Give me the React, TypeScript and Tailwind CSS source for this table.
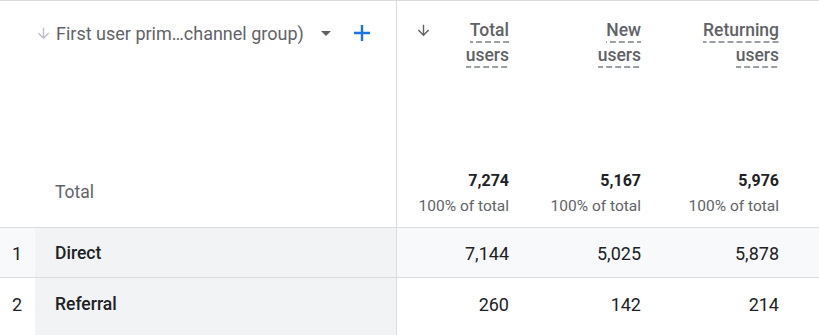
import React from 'react'

const METRICS = [
  { key: 'total', top: 'Total', bottom: 'users', width: 'w-[122px]', sorted: true },
  { key: 'new', top: 'New', bottom: 'users', width: 'w-[132px]', sorted: false },
  { key: 'ret', top: 'Returning', bottom: 'users', width: 'w-[138px]', sorted: false },
]

const TOTALS = ['7,274', '5,167', '5,976']

const ROWS = [
  { idx: 1, name: 'Direct', values: ['7,144', '5,025', '5,878'] },
  { idx: 2, name: 'Referral', values: ['260', '142', '214'] },
]

function ArrowDown({ className }: { className?: string }) {
  return (
    <svg viewBox="0 0 24 24" className={className} fill="currentColor">
      <path d="M20 12l-1.41-1.41L13 16.17V4h-2v12.17l-5.58-5.59L4 12l8 8 8-8z" />
    </svg>
  )
}

function Dashed({ children }: { children: React.ReactNode }) {
  return (
    <span className="inline-block bg-[linear-gradient(to_right,#9aa0a6_66%,transparent_0)] bg-[length:9px_2px] bg-repeat-x bg-bottom">
      {children}
    </span>
  )
}

export default function App() {
  return (
    <div className="w-[819px] h-[335px] overflow-hidden bg-white border-t border-[#dadce0] font-['Roboto',sans-serif] text-[#202124]">
      {/* header */}
      <div className="flex h-[159px]">
        <div className="w-[35px]" />
        <div className="w-[362px] border-r border-[#dadce0] flex items-start pt-[20px]">
          <div className="flex items-center h-[24px]">
            <ArrowDown className="w-[17px] h-[17px] text-[#bdc1c6]" />
            <span className="ml-[4px] text-[18px] text-[#5f6368]">First user prim…channel group)</span>
            <svg viewBox="0 0 10 5" className="w-[10px] h-[5px] ml-[17px] text-[#5f6368]" fill="currentColor">
              <path d="M0 0h10L5 5z" />
            </svg>
            <svg viewBox="0 0 16 16" className="w-[16px] h-[16px] ml-[23px] text-[#1a73e8]" fill="currentColor">
              <path d="M6.8 0h2.4v6.8H16v2.4H9.2V16H6.8V9.2H0V6.8h6.8z" />
            </svg>
          </div>
        </div>
        {METRICS.map(m => (
          <div key={m.key} className={`${m.width} relative pr-[10px] pt-[17px] flex flex-col items-end text-[17.5px] font-medium text-[#5f6368] leading-[25px]`}>
            {m.sorted && (
              <ArrowDown className="absolute left-[18px] top-[21px] w-[17px] h-[17px] text-[#5f6368]" />
            )}
            <Dashed>{m.top}</Dashed>
            <Dashed>{m.bottom}</Dashed>
          </div>
        ))}
      </div>

      {/* total row */}
      <div className="flex h-[68px] border-b border-[#dadce0]">
        <div className="w-[35px]" />
        <div className="w-[362px] border-r border-[#dadce0] flex items-center pl-[20px] pb-[3px] text-[17.5px] text-[#5f6368]">
          Total
        </div>
        {METRICS.map((m, i) => (
          <div key={m.key} className={`${m.width} pr-[10px] flex flex-col items-end pt-[8px]`}>
            <span className="text-[16px] font-bold leading-[25px] text-[#202124]">{TOTALS[i]}</span>
            <span className="text-[15.5px] leading-[25px] mt-[1px] text-[#5f6368]">100% of total</span>
          </div>
        ))}
      </div>

      {/* data rows */}
      {ROWS.map((r, ri) => {
        const cell = ri === 0 ? 'pt-[2px]' : 'pt-[2px] pb-[7px]'
        return (
          <div
            key={r.idx}
            className={`flex ${ri === 0 ? 'h-[50px] bg-[#f8f9fa] border-b border-[#dadce0]' : 'h-[57px] bg-white'}`}
          >
            <div className={`w-[35px] flex items-center justify-end pr-[13px] text-[18px] text-[#202124] ${cell}`}>
              {r.idx}
            </div>
            <div className={`w-[362px] bg-[#f1f3f4] border-r border-[#dadce0] flex items-center pl-[20px] text-[17.5px] font-medium text-[#202124] ${cell}`}>
              {r.name}
            </div>
            {METRICS.map((m, i) => (
              <div key={m.key} className={`${m.width} pr-[10px] flex items-center justify-end text-[18px] text-[#202124] ${cell}`}>
                {r.values[i]}
              </div>
            ))}
          </div>
        )
      })}
    </div>
  )
}
